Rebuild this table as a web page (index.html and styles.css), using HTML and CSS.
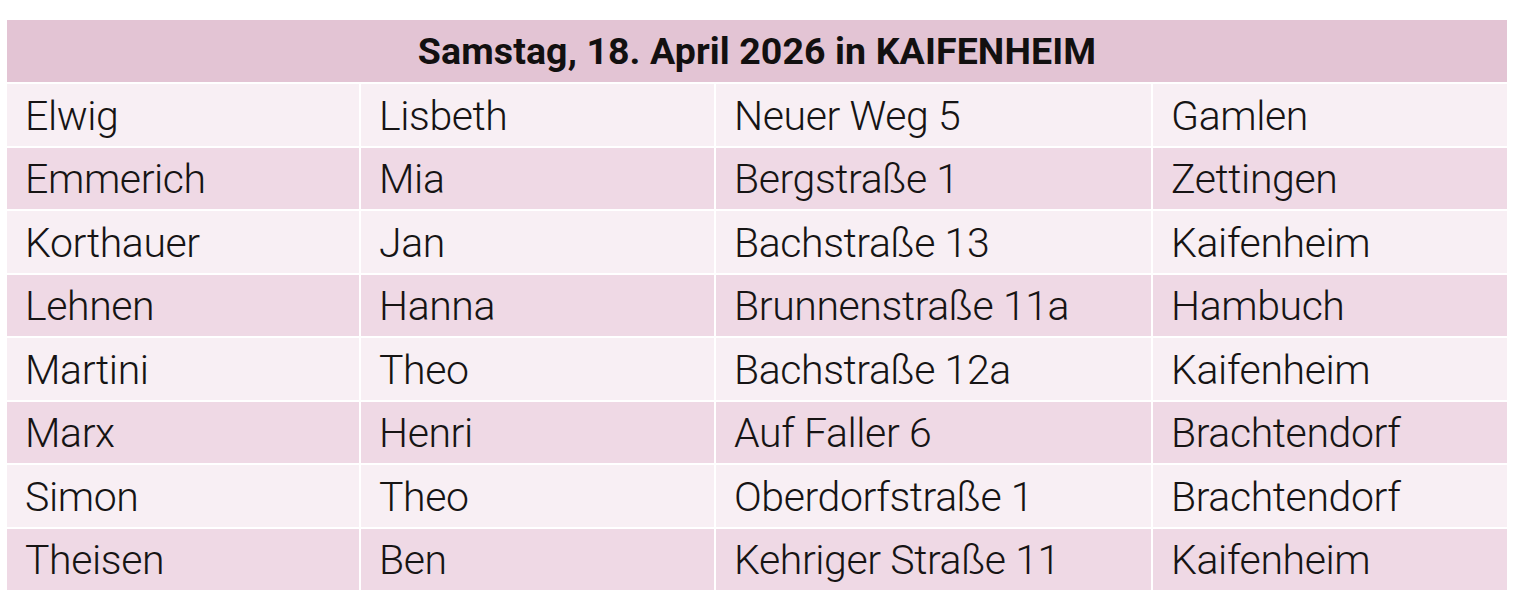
FILE: index.html
```
<!DOCTYPE html>
<html lang="de">
<head>
<meta charset="utf-8">
<title>Samstag, 18. April 2026 in KAIFENHEIM</title>
<link rel="stylesheet" href="styles.css">
</head>
<body>
<div class="page">
<table class="list">
  <colgroup>
    <col class="c1"><col class="c2"><col class="c3"><col class="c4">
  </colgroup>
  <thead>
    <tr><th colspan="4">Samstag, 18. April 2026 in KAIFENHEIM</th></tr>
  </thead>
  <tbody>
    <tr><td>Elwig</td><td>Lisbeth</td><td>Neuer Weg 5</td><td>Gamlen</td></tr>
    <tr><td>Emmerich</td><td>Mia</td><td>Bergstraße 1</td><td>Zettingen</td></tr>
    <tr><td>Korthauer</td><td>Jan</td><td>Bachstraße 13</td><td>Kaifenheim</td></tr>
    <tr><td>Lehnen</td><td>Hanna</td><td>Brunnenstraße 11a</td><td>Hambuch</td></tr>
    <tr><td>Martini</td><td>Theo</td><td>Bachstraße 12a</td><td>Kaifenheim</td></tr>
    <tr><td>Marx</td><td>Henri</td><td>Auf Faller 6</td><td>Brachtendorf</td></tr>
    <tr><td>Simon</td><td>Theo</td><td>Oberdorfstraße 1</td><td>Brachtendorf</td></tr>
    <tr><td>Theisen</td><td>Ben</td><td>Kehriger Straße 11</td><td>Kaifenheim</td></tr>
  </tbody>
</table>
</div>
</body>
</html>
```
FILE: styles.css
```
html, body {
  margin: 0;
  padding: 0;
  background: #ffffff;
}

.page {
  padding: 18px 0 0 5px;
}

.list {
  border-collapse: separate;
  border-spacing: 2px;
  table-layout: fixed;
  width: 1504px;
  color: #161414;
}

.c1 { width: 352px; }
.c2 { width: 353px; }
.c3 { width: 435px; }
.c4 { width: 354px; }

.list th {
  height: 62px;
  padding: 1px 0 0 0;
  box-sizing: border-box;
  background: #e3c4d4;
  font-family: Roboto, "Liberation Sans", Arial, sans-serif;
  font-size: 37.5px;
  font-weight: 700;
  letter-spacing: 0.1px;
  text-align: center;
  vertical-align: middle;
  line-height: 1;
  color: #121010;
}

.list td {
  height: 61.5px;
  padding: 2px 0 0 18px;
  font-family: Roboto, "Liberation Sans", Arial, sans-serif;
  font-weight: 300;
  font-size: 41px;
  letter-spacing: -0.4px;
  vertical-align: middle;
  white-space: nowrap;
  box-sizing: border-box;
}

.list tbody tr:nth-child(odd) td {
  background: #f8eff4;
}

.list tbody tr:nth-child(even) td {
  background: #efd9e5;
}
```
